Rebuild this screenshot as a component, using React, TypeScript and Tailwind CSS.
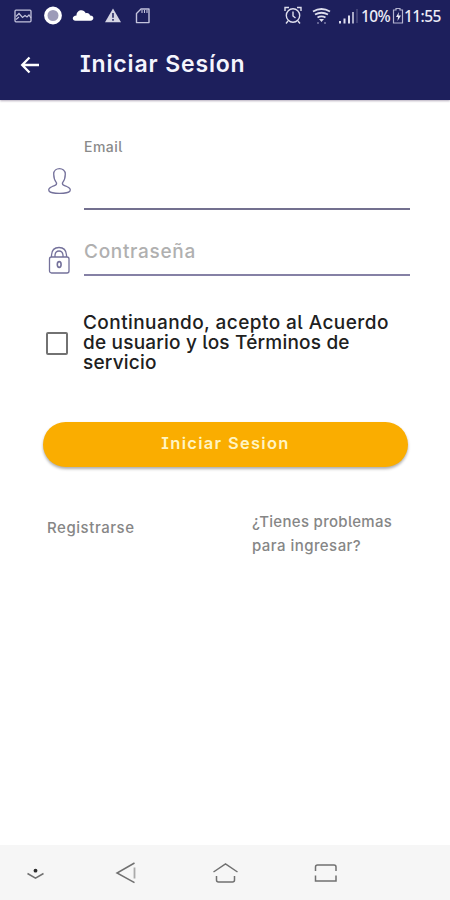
import React from "react";

function StatusBar() {
  return (
    <div className="flex h-8 items-center pl-[14px] pr-[9px] text-[#ececf7]">
      <svg width="138" height="20" viewBox="0 0 138 20" className="shrink-0" fill="none">
        <rect x="1" y="4.2" width="16" height="11.6" rx="1" stroke="#c3c3dc" strokeWidth="1.3" />
        <path d="M2 10.500l3-3 3.500 4L11 9.500l2 1.500 2-2 2 3M2 13.500l3-2.500" stroke="#c3c3dc" strokeWidth="1.2" />
        <circle cx="39" cy="9.500" r="7.200" fill="#9d9bb8" stroke="#fff" strokeWidth="3.400" />
        <path d="M61.500 14.700c-3.500 0-4-5 1-5.200C62.200 4 69.500 2 71.800 7.200c2-.8 4 .6 4.200 2.400 4.300-.2 4.500 5.100.5 5.100z" fill="#fff" />
        <path d="M99 2.500l8 13.700H91z" fill="#d5d5e4" />
        <path d="M99 7v4.800M99 13v1.800" stroke="#33346b" strokeWidth="1.7" />
        <path d="M127 3h8v13.600h-12.500V7.500z" stroke="#c3c3dc" strokeWidth="1.4" strokeLinejoin="round" />
        <path d="M128 4v3M130.500 4v3M133 4v3" stroke="#c3c3dc" strokeWidth="1.100" />
      </svg>
      <div className="ml-auto flex items-center">
        <svg width="78" height="22" viewBox="0 0 78 22" fill="none" className="shrink-0">
          <circle cx="10" cy="10.500" r="6.700" stroke="#dedeed" strokeWidth="1.4" />
          <path d="M10 6.500v4.500l2.500 2M2 6V2.500h4M14 2.500h4V6M5 16l-2 2.500M15 16l2 2.500" stroke="#dedeed" strokeWidth="1.4" />
          <path d="M30 6.500q8.500-5 17 0M32 9.500q6.500-3.500 13 0M34.500 12.500q4-2.200 8 0" stroke="#dedeed" strokeWidth="1.900" />
          <path d="M36 14h5l-2.500 3z" fill="#dedeed" />
          <path d="M35 17v2M42 17v2" stroke="#a7a7c8" />
          <path d="M57 16v2.500M61.500 13.500v5M66 10.500v8" stroke="#dedeed" strokeWidth="2" />
          <path d="M70 7v11.500" stroke="#b8b8d2" strokeWidth="1.800" />
          <path d="M74 4v14" stroke="#44457b" strokeWidth="1.800" />
        </svg>
        <span className="w-[31px] font-['Noto_Sans',sans-serif] text-[15.500px] font-medium leading-5 tracking-[-0.6px] whitespace-nowrap">10%</span>
        <svg width="12" height="18" viewBox="0 0 12 18" fill="none" className="shrink-0">
          <path d="M4 3V1.500h4V3h2.500v13h-9V3z" stroke="#b4b4d0" strokeWidth="1.2" />
          <path d="M7 5L4 10h2l-.5 4L9 8.500H6.500z" fill="#e8e8f4" />
        </svg>
        <span className="w-[37px] font-['Noto_Sans',sans-serif] text-[15.500px] font-medium leading-5 tracking-[-0.6px] whitespace-nowrap">11:55</span>
      </div>
    </div>
  );
}

function NavBar() {
  return (
    <nav className="flex h-[55px] items-center bg-[#f6f6f6]">
      <svg width="450" height="55" viewBox="0 0 450 55" fill="none" stroke="#707070" strokeWidth="1.500">
        <circle cx="35.500" cy="25.700" r="1.900" fill="#2d2d2d" stroke="none" />
        <path d="M27.500 28.500l8 4.700 8-4.700" />
        <path d="M134.500 18L117 28l17.500 9.700" />
        <path d="M134.500 22.500v11" stroke="#aaa" strokeWidth="1.800" />
        <path d="M213.500 27L225.500 19l12 8" />
        <path d="M216.500 31v4q0 2 2 2h14q2 0 2-2v-4" />
        <path d="M315.500 26v-4q0-2 2-2h16.500q2 0 2 2v4M315.500 30.500V36h20.500v-5.500" />
      </svg>
    </nav>
  );
}

export default function App() {
  return (
    <div className="flex h-[900px] w-[450px] flex-col overflow-hidden bg-white font-['Inter','Liberation_Sans',sans-serif] [font-feature-settings:'cv05','cv08']">
      <header className="h-[100px] shrink-0 bg-[#1d1f5c] shadow-[0_1px_2px_rgba(70,50,90,0.4)]">
        <StatusBar />
        <div className="flex h-[63px] items-center pl-5">
          <svg width="20" height="20" viewBox="0 0 20 20" fill="none" stroke="#fff" strokeWidth="2.300" className="mt-[3px]">
            <path d="M19 10H2.500M9.500 2.500L2.200 10l7.300 7.500" />
          </svg>
          <h1 className="ml-10 text-[23px] font-semibold leading-8 tracking-[0.85px] whitespace-nowrap text-[#f5f5fd]">Iniciar Sesíon</h1>
        </div>
      </header>

      <main className="flex-1">
        <div className="flex h-[110px] pl-[47px] pt-[37px]">
          <svg width="25" height="28" viewBox="0 0 25 28" fill="none" stroke="#74719b" strokeWidth="1.300" className="mt-[30px] shrink-0">
            <path d="M9.500 15.800C7.200 13 6.700 10 6.700 7c0-7.300 11.600-7.300 11.600 0 0 3-.5 6-2.800 8.800-.8 2.700 1.200 2.600 4.200 3.700 3.200 1.200 4.100 3.200 3.300 4.500-2.500 3.200-18.500 3.200-21 0-.8-1.300.1-3.300 3.300-4.500 3-1.100 5-1 4.200-3.700z" />
          </svg>
          <label className="ml-3 h-[73px] w-[326px] border-b-2 border-[#73708f] text-[14px] font-medium leading-5 tracking-[0.45px] text-[#8a8a8a]">Email</label>
        </div>

        <div className="flex h-[67px] pl-[48px] pt-[27px]">
          <svg width="22" height="30" viewBox="0 0 22 30" fill="none" stroke="#74719b" strokeWidth="1.300" className="mt-[8px] shrink-0">
            <rect x="1.500" y="12" width="19.500" height="16" rx="2" />
            <path d="M3.500 12V10q.5-7.500 7.500-7.500T18.500 10v2M7 12v-2q.5-4 4-4t4 4v2" />
            <ellipse cx="11.200" cy="19.500" rx="1.900" ry="2.900" strokeWidth="1.600" />
          </svg>
          <label className="ml-[14px] h-[39px] w-[326px] border-b-2 border-[#8581a5] pt-px text-[19px] font-medium leading-7 tracking-[0.7px] text-[#b0b0b0]">Contraseña</label>
        </div>

        <div className="mt-[36px] flex pl-[46px]">
          <div className="mt-[19px] h-[23px] w-[22px] shrink-0 rounded-[2px] border-2 border-[#727272]" />
          <p className="ml-[15px] text-[19px] font-medium leading-5 tracking-[0.2px] whitespace-nowrap text-[#202020]">
            <span className="tracking-[0.43px]">Continuando, acepto al Acuerdo</span><br />de usuario y los Términos de<br />servicio
          </p>
        </div>

        <button className="mt-[49px] ml-[43px] flex h-[45px] w-[365px] items-center justify-center rounded-full bg-[#faad00] pb-[3px] text-[16.500px] font-semibold leading-5 tracking-[1.300px] text-[#fff4c2] shadow-[0_2px_3px_rgba(0,0,0,0.32)]">
          Iniciar Sesion
        </button>

        <div className="mt-[43px] flex pl-[47px] text-[15px] font-medium leading-6 text-[#868686]">
          <a className="mt-[6px] w-[205px] tracking-[0.55px]">Registrarse</a>
          <a className="whitespace-nowrap tracking-[0.3px]">¿Tienes problemas<br /><span className="tracking-[0.45px]">para ingresar?</span></a>
        </div>
      </main>
      <NavBar />
    </div>
  );
}
